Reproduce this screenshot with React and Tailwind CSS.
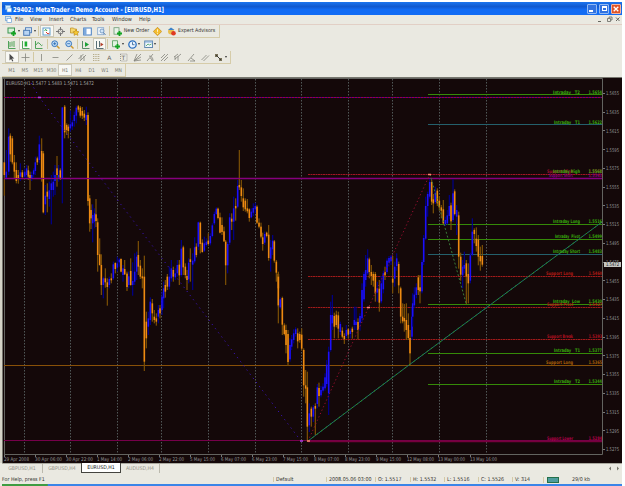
import React from 'react';

const MENU = [
  { label: 'File', w: 'w-[15px]' },
  { label: 'View', w: 'w-[19px]' },
  { label: 'Insert', w: 'w-[21px]' },
  { label: 'Charts', w: 'w-[22px]' },
  { label: 'Tools', w: 'w-[20px]' },
  { label: 'Window', w: 'w-[27px]' },
  { label: 'Help', w: 'w-[15px]' },
];

// Candles: direction, x, high, open/close top, open/close bottom, low.
// Values are thirds of a pixel from the origin of the segment.
const SEGMENTS = [
  {
    x: 0, y: 75,
    rows: `d 13 262 262 300 362|u 19 225 290 308 315|u 26 160 185 290 300|d 31 175 182 238 260|d 37 183 190 262 268|d 43 240 262 290 310|d 49 262 285 318 325
d 55 285 300 312 326|u 61 265 292 305 318|d 67 285 292 306 312|u 74 280 290 305 310|u 80 270 280 300 310|d 85 272 286 305 315|d 90 290 300 312 345|u 95 290 300 310 318
u 101 280 286 298 310|u 106 245 262 288 300|d 112 245 250 262 270|u 118 182 208 255 265|d 125 190 228 308 320|d 130 228 235 412 415|u 136 330 362 388 420
d 142 325 350 365 412|u 148 320 346 372 395|u 154 300 325 345 448|u 160 290 320 345 365|u 165 270 300 318 360|d 171 243 280 300 335|u 176 270 300 308 320
d 181 280 286 308 315|u 187 97 97 312 385|d 194 90 95 172 190|d 200 145 150 165 180|d 205 148 155 168 190|u 211 107 148 160 170|u 217 135 142 154 165
u 223 110 120 138 155|u 229 92 98 122 145|d 235 90 94 104 112|d 241 93 98 122 128|d 247 96 108 122 132|d 253 105 116 128 138|u 259 95 120 135 150
d 264 112 120 378 392|d 269 360 370 445 470|d 273 388 405 430 462|u 278 388 420 445 502|u 284 400 415 440 460|d 288 372 418 438 456|d 293 430 442 540 590
d 299 490 538 570 572|d 304 538 570 630 660|u 310 605 610 630 670|d 316 580 610 622 638|d 322 610 622 636 692|u 328 605 612 630 640|d 334 595 610 616 625
u 340 560 568 610 615|d 346 562 564 582 595|u 352 545 565 578 590|u 358 550 554 562 575|d 363 550 552 590 592|u 369 570 580 600 620|d 374 555 582 598 600
d 381 590 596 636 648|u 386 590 604 630 640|d 392 550 588 630 632|u 398 562 618 630 662|u 404 535 590 620 630|u 410 530 545 590 615|d 415 498 540 575 600
d 421 555 572 605 612|d 427 580 604 610 640|d 433 542 605 860 888|d 439 710 740 790 820|u 445 710 730 755 780|u 451 667 680 735 750|d 457 672 685 715 740
d 463 705 725 735 745|d 469 715 730 740 752|u 475 690 705 725 745|d 480 690 700 715 730|u 486 650 665 705 720|u 491 620 640 670 700|d 496 615 630 650 668`,
  },
  {
    x: 150, y: 130,
    rows: `d 52 432 440 470 480|u 58 410 440 470 478|u 64 390 415 445 455|d 70 410 420 440 455|u 76 415 430 442 450|u 82 390 405 430 440|d 88 390 404 436 465
u 94 330 356 435 440|d 100 347 352 412 435|d 106 400 410 435 445|d 111 420 438 450 480|u 116 385 398 448 460|d 121 355 388 396 455|u 128 370 392 404 480
u 134 322 352 394 400|d 139 340 350 375 382|u 145 275 277 350 360|d 151 275 278 342 370|d 157 328 338 366 368|u 163 320 340 362 366|u 169 325 335 345 350
d 175 310 332 342 346|u 181 310 318 340 346|u 187 280 286 318 322|u 193 245 252 280 285|u 199 232 236 252 255|d 204 233 236 264 268|d 210 248 262 308 310
d 216 262 285 306 315|d 222 290 304 334 336|d 227 330 335 406 465|u 233 335 342 406 430|u 239 250 262 338 345|d 245 250 266 275 300|u 251 200 235 275 330
d 257 205 228 235 272|u 263 150 168 230 235|d 268 60 165 172 180|d 274 150 172 198 215|d 280 175 205 232 243|d 286 205 212 238 245|d 292 207 235 244 250
d 298 235 238 264 275|u 304 235 245 262 265|u 310 220 234 248 258|u 316 218 228 238 250|d 321 226 230 278 282|d 327 265 278 290 295|d 333 278 290 320 325
d 338 308 322 342 362|u 344 305 312 338 345|d 350 305 308 318 322|d 356 285 314 384 392|u 362 330 352 386 425|u 368 315 332 358 375|d 373 330 334 392 398
d 379 390 395 428 455|d 385 428 432 475 530`,
  },
  {
    x: 230, y: 270,
    rows: `d 145 5 20 106 160|u 151 82 88 112 116|d 157 80 84 164 195|d 163 160 166 192 196|d 168 164 180 225 250|d 174 180 192 276 288|u 180 205 225 268 275
u 185 195 208 230 240|u 191 178 190 210 220|u 197 172 178 192 200|d 203 175 190 214 235|d 209 185 192 210 218|d 215 175 194 236 242|d 221 235 240 346 380
d 227 300 346 356 400|d 232 305 352 470 515|u 238 400 430 466 486|d 244 410 416 440 470|u 250 405 412 440 456|d 256 400 408 416 495|u 262 342 352 402 415
d 267 338 354 378 410|u 273 348 360 376 382|u 279 340 350 362 368|u 285 310 322 355 362|u 290 270 284 342 350|u 296 230 245 370 435|u 302 95 135 240 245
u 307 75 135 160 180|d 313 128 138 170 205|d 319 122 134 165 172|d 325 125 136 176 205|u 331 155 162 186 195|d 337 172 182 200 205|d 343 190 198 208 222
u 349 165 180 198 205|d 355 175 178 194 205|u 361 175 182 192 205|d 367 170 176 186 206|u 373 110 150 165 180|u 378 110 155 165 180|d 384 145 156 180 208
u 390 130 138 158 182|u 396 40 60 145 155|u 402 5 12 88 95`,
  },
  {
    x: 300, y: 150,
    rows: `u 197 315 360 390 410|u 203 298 325 370 375|d 208 323 328 366 385|d 214 345 366 378 405|d 220 365 372 392 410|d 226 366 372 430 455|u 232 395 415 428 455
d 238 390 416 458 485|u 244 378 400 454 460|u 250 362 370 418 430|d 255 350 366 376 390|u 261 325 332 366 372|u 267 318 324 338 350|u 273 315 320 334 345
d 278 318 386 398 430|u 284 335 350 386 410|u 290 310 325 348 362|d 296 335 342 406 430|d 302 410 415 500 520|d 308 460 500 514 520|d 313 462 504 514 545
d 319 460 510 540 570|d 325 490 525 564 570|d 330 540 564 610 645|u 336 470 500 560 570|u 338 430 460 500 530|u 343 412 434 466 475|u 349 400 412 435 445
d 355 375 382 420 435|d 360 375 412 424 460|u 366 330 336 424 430|u 371 255 264 336 345|u 377 140 168 266 270|u 383 125 132 168 200|u 389 85 96 140 146
d 395 90 96 155 165|d 400 132 148 160 190|u 406 110 128 156 162|d 412 115 122 160 168|d 418 138 152 172 182|d 424 165 172 182 205|d 430 150 178 220 224
u 436 200 210 222 228|u 442 180 196 220 224|u 448 135 168 198 208|d 453 158 166 214 240|u 459 88 130 210 216|d 464 118 124 192 196|u 470 165 180 200 255
d 476 185 196 320 356`,
  },
  {
    x: 410, y: 150,
    rows: `d 152 308 320 374 392|u 158 330 350 376 415|u 163 305 345 356 370|d 169 330 340 380 462|d 175 340 372 400 460|u 181 308 316 392 400|u 187 205 245 314 318
d 193 235 240 252 280|d 199 232 266 288 305|d 205 255 268 320 346|d 211 290 318 334 362|d 217 285 318 344 350`,
  },
];

const DAY_LINES = [24, 70, 117, 161, 208, 255, 301, 348, 392, 439, 486];

const TIMES = [
  [4, '29 Apr 2008'], [35, '30 Apr 06:00'], [66, '30 Apr 22:00'], [97, '1 May 14:00'],
  [128, '2 May 06:00'], [159, '2 May 22:00'], [190, '5 May 15:00'], [221, '6 May 07:00'],
  [252, '6 May 23:00'], [283, '7 May 15:00'], [314, '8 May 07:00'], [345, '8 May 23:00'],
  [376, '9 May 15:00'], [407, '12 May 08:00'], [438, '13 May 00:00'], [470, '13 May 16:00'],
];

// label, price, line y, x where the name starts, color
const LEVELS = [
  ['Support High', '1.5568', 174, 547, '#a01030'],
  ['Support Short', '1.5563', 178, 549, '#86007c'],
  ['Support Long', '1.5460', 276, 546, '#b01a14'],
  ['Support Pivot', '1.5427', 307, 547, '#b01a14'],
  ['Support Break', '1.5393', 339, 547, '#b01020'],
  ['Support Long', '1.5365', 365, 546, '#a86008'],
  ['Support Lower', '1.5284', 441, 547, '#b00048'],
  ['Intraday   T2', '1.5654', 95, 553, '#38a80c'],
  ['Intraday   T1', '1.5622', 125, 554, '#38a80c'],
  ['Intraday High', '1.5568', 174, 553, '#38a80c'],
  ['Intraday Long', '1.5516', 224, 553, '#38a80c'],
  ['Intraday  Pivot', '1.5499', 239, 555, '#38a80c'],
  ['Intraday Short', '1.5483', 254, 553, '#38a80c'],
  ['Intraday  Low', '1.5430', 304, 553, '#38a80c'],
  ['Intraday   T1', '1.5377', 353, 554, '#38a80c'],
  ['Intraday   T2', '1.5344', 384, 554, '#38a80c'],
];

function Candle({ row }) {
  const [dir, ...n] = row.trim().split(' ');
  const [x, high, top, bottom, low] = n.map(Number);
  const up = dir === 'u';
  return (
    <g>
      <rect x={x - 1.8} y={high} width="3.6" height={low - high} fill={up ? '#00008a' : '#7c5006'} />
      <rect x={x - 2.3} y={top} width="4.7" height={bottom - top} fill={up ? '#1c10fa' : '#ee8a12'} />
    </g>
  );
}

function HLine({ y, x = 4, color, dash, w = 1 }) {
  return <line x1={x} x2="602" y1={y + 0.5} y2={y + 0.5} stroke={color} strokeWidth={w} strokeDasharray={dash} />;
}

function Chart() {
  const prices = Array.from({ length: 20 }, (_, i) => (1.5655 - i * 0.002).toFixed(4));
  return (
    <svg width="622" height="386" viewBox="0 77 622 386" className="block shrink-0">
      <rect x="0" y="77" width="622" height="386" fill="#d6d4c8" />
      <rect x="2" y="77" width="620" height="386" fill="#77776f" />
      <rect x="3" y="78" width="619" height="385" fill="#140809" />
      <path d="M4.5 79V454.500M3 78.500H602.500V454.500H4" stroke="#63635f" fill="none" />

      {DAY_LINES.map((x) => (
        <line key={x} x1={x + 0.5} x2={x + 0.5} y1="79" y2="454" stroke="#515858" strokeDasharray="1.500 1.500" />
      ))}

      {/* Levels */}
      <HLine y={94} x={428} color="#358a08" />
      <HLine y={97} color="#3a0090" />
      <HLine y={97} color="#98004c" dash="2 1" />
      <HLine y={124} x={428} color="#24606c" />
      <HLine y={174} x={308} color="#a01424" dash="2 0.500" />
      <HLine y={178} color="#86007e" w={1.5} />
      <HLine y={224} x={428} color="#358a08" />
      <HLine y={239} x={428} color="#358a08" />
      <HLine y={254} x={428} color="#24606c" />
      <HLine y={276} x={308} color="#a01a1a" dash="2 0.500" />
      <HLine y={304} x={428} color="#358a08" />
      <HLine y={307} x={308} color="#a01a1a" dash="2 0.500" />
      <HLine y={339} x={308} color="#a01a1a" dash="2 0.500" />
      <HLine y={353} x={428} color="#358a08" />
      <HLine y={365} color="#885008" />
      <HLine y={384} x={428} color="#358a08" />
      <HLine y={440} color="#76004a" />
      <HLine y={441} x={308} color="#76003c" w={1.4} />

      {/* Candles */}
      {SEGMENTS.map((s, i) => (
        <g key={i} transform={`translate(${s.x} ${s.y}) scale(0.33333)`}>
          {s.rows.split(/[|\n]/).map((row, j) => (
            <Candle key={j} row={row} />
          ))}
        </g>
      ))}
      <HLine y={178} color="#86007e" w={1.2} />

      {/* Trend lines */}
      <path d="M31 83L39.500 97.500L301 441" stroke="#3a12b8" strokeDasharray="1.200 4" fill="none" />
      <path d="M308 441L368.500 307.500L430 174" stroke="#9c0e30" strokeDasharray="1.200 2.500" fill="none" />
      <path d="M430 174L466 303" stroke="#3a7c38" strokeDasharray="2 2" fill="none" />
      <path d="M308 441L409 365L602 222" stroke="#1c7468" fill="none" />
      <path d="M308 441L409 365L602 222" stroke="#309414" strokeDasharray="1.500 4" fill="none" />
      <path d="M38 97.500h3M300 441h3" stroke="#b040e0" strokeWidth="1.600" />
      <path d="M307 441h3M367 307.500h3M428 174.500h3" stroke="#ff8070" strokeWidth="1.600" />

      {/* Texts */}
      <g fontFamily="'DejaVu Sans Condensed', 'DejaVu Sans', sans-serif" fontSize="5">
        <text x="6" y="84.500" fill="#a2a5a2" textLength="88" lengthAdjust="spacingAndGlyphs">EURUSD,H1  1.5477 1.5483 1.5471 1.5472</text>
        {LEVELS.map(([label, price, y, x, color], i) => (
          <g key={i} fill={color} fontSize="4.800" fontWeight="bold">
            <text x={x} y={y - 1} textLength={label.startsWith('I') ? 580 - x : 573 - x} lengthAdjust="spacingAndGlyphs" xmlSpace="preserve">{label}</text>
            <text x="588.500" y={y - 1} textLength="13.500" lengthAdjust="spacingAndGlyphs">{price}</text>
          </g>
        ))}
        {prices.map((p, i) => (
          <g key={p}>
            <path d={`M603 ${Math.round(93 + i * 18.74) + 0.5}h2`} stroke="#777" />
            <text x="606" y={95.300 + i * 18.74} fill="#969999" textLength="13" lengthAdjust="spacingAndGlyphs">{p}</text>
          </g>
        ))}
        <rect x="604" y="262" width="17" height="5" fill="#c6c6c2" />
        <text x="606" y="266.400" fill="#222" textLength="13" lengthAdjust="spacingAndGlyphs">1.5472</text>
        {TIMES.map(([x, t]) => (
          <g key={x}>
            <path d={`M${x + 0.5} 455v2`} stroke="#777" />
            <text x={x} y="461" fill="#969999" textLength={t.length < 12 ? 25 : 27} lengthAdjust="spacingAndGlyphs">{t}</text>
          </g>
        ))}
      </g>
    </svg>
  );
}

const plus = <path d="M6.500 4v5M4 6.500h5" stroke="#12a322" strokeWidth="1.800" />;
const gray = { stroke: '#85857d', fill: 'none', strokeWidth: 0.8 };

const ICONS = {
  newChart: <><rect x="1" y="1" width="6.500" height="5" fill="#d6f1d8" stroke="#3b9651" />{plus}</>,
  profiles: <><rect x="2.500" y="0.700" width="6" height="5" fill="#ddeaf8" stroke="#5a86bd" /><rect x="0.700" y="3.300" width="6" height="5" fill="#b9d5f3" stroke="#4c7bb5" /></>,
  market: <><rect x="1" y="1" width="7" height="7" fill="#fff" stroke="#5e9dcc" /><path d="M2.500 3.500l1.500-1 1 1.500" stroke="#22a040" fill="none" /><path d="M4 5l2 2 1.500-1" stroke="#e03828" fill="none" /></>,
  target: <><circle cx="4.500" cy="4.500" r="2.500" fill="none" stroke="#777" /><path d="M4.500 0v3.500M4.500 5.500V9M0 4.500h3.500M5.500 4.500H9" stroke="#777" /></>,
  folder: <><path d="M0.500 1h3l1 1h2v4h-6z" fill="#f5d66c" stroke="#bc8c20" strokeWidth="0.700" /><path d="M6 2.500l1 2 2 .3-1.500 1.400.4 2.200L6 7.300 4 8.400l.4-2.200L3 4.800l2-.3z" fill="#f6c832" stroke="#b88710" strokeWidth="0.600" /></>,
  terminal: <><rect x="0.700" y="1" width="7.600" height="7" fill="#fff" stroke="#477fc3" /><rect x="1" y="1" width="2.500" height="7" fill="#7da9dd" /></>,
  tester: <><rect x="0.700" y="0.700" width="6" height="7" fill="#eff5fb" stroke="#83a5cb" strokeWidth="0.800" /><circle cx="5" cy="4" r="2" fill="#d0e4f7" stroke="#5c85b5" strokeWidth="0.700" /><path d="M6.500 5.500l2 2.500" stroke="#5c85b5" /></>,
  order: <><rect x="1" y="0.700" width="5" height="6.500" fill="#e8f2e8" stroke="#6c9c74" strokeWidth="0.800" />{plus}</>,
  diamond: <><path d="M4.500 .3L8.700 4.500 4.500 8.700 .3 4.500z" fill="#f4bd2e" stroke="#b97e10" strokeWidth="0.600" /><path d="M4.500 2.300v2.500M4.500 5.800v1" stroke="#fff3ce" /></>,
  expert: <><circle cx="4" cy="4.500" r="3" fill="#e8bf50" /><path d="M1 3l3-2.500L7.500 3z" fill="#3c82cc" /><circle cx="6.500" cy="6.300" r="2.300" fill="#df3a22" /></>,
  bars: <path d="M1.500 1v7.500h7M3 2v5M5 1.500v5M7 1v6" stroke="#3e9a4b" fill="none" strokeWidth="0.900" />,
  candles: <><path d="M1.500 1v7.500h7" stroke="#3e9a4b" fill="none" strokeWidth="0.900" /><rect x="3.600" y="1.500" width="2.600" height="5" fill="#1cae32" /></>,
  line: <path d="M1.500 1v7.500h7M2 5q2-4 4-1t2.500 1" stroke="#3e9a4b" fill="none" strokeWidth="0.900" />,
  zoomIn: <><circle cx="3.700" cy="3.700" r="2.900" fill="#c3def8" stroke="#3776bd" /><path d="M2.200 3.700h3M3.700 2.200v3" stroke="#2563a9" strokeWidth="0.800" /><path d="M6 6l2.500 2.500" stroke="#cf982a" strokeWidth="1.400" /></>,
  zoomOut: <><circle cx="3.700" cy="3.700" r="2.900" fill="#c3def8" stroke="#3776bd" /><path d="M2.200 3.700h3" stroke="#2563a9" strokeWidth="0.800" /><path d="M6 6l2.500 2.500" stroke="#cf982a" strokeWidth="1.400" /></>,
  scroll: <><path d="M1.500 1v7.500h7" stroke="#4a8258" fill="none" strokeWidth="0.900" /><path d="M4 2l4 2.500L4 7z" fill="#1ca036" /></>,
  shift: <><path d="M1.500 1v7.500h7M4.500 1v6" stroke="#455f68" fill="none" strokeWidth="0.900" /><path d="M5.500 2.500l3 2-3 2z" fill="#b0402c" /></>,
  indicators: <><path d="M1.500 .7h5v6h-5z" fill="#e1f3e0" stroke="#4e9d58" strokeWidth="0.800" />{plus}</>,
  clock: <><circle cx="4.500" cy="4.500" r="3.700" fill="#e8f3ff" stroke="#2b6fc0" strokeWidth="1.300" /><path d="M4.500 2.200v2.500h2" stroke="#26598f" fill="none" strokeWidth="0.800" /></>,
  template: <><rect x="0.700" y="1" width="7.800" height="6.500" fill="#eef5fb" stroke="#6189b0" /><path d="M1 2h7.500" stroke="#7ca7d8" /><path d="M2 6l2-2 1.500 1L7.500 4" stroke="#43a05c" fill="none" strokeWidth="0.800" /></>,
  cursor: <path d="M2.500 .7v6.800l1.600-1.600L5.300 8.500l1-.5-1.200-2.400H7.300z" fill="#4a4a4a" />,
  cross: <path d="M4.500 0.500v8M0.500 4.500h8" {...gray} />,
  vline: <path d="M4.500 1v7" {...gray} />,
  hline: <path d="M1.500 4.500h6" {...gray} />,
  trend: <path d="M1.500 7.500l6-6" {...gray} />,
  channel: <path d="M0.500 6l5-5M2 8l6-6M3 2v5M6 3v5" {...gray} />,
  fib: <path d="M1 1.500h7M1 3.500h7M1 5.500h7M1 7.500h7" {...gray} stroke="#a79b72" strokeDasharray="1 0.700" />,
  letterA: <text x="2.300" y="6.800" fontSize="6" fill="#66665f" fontFamily="DejaVu Sans">A</text>,
  letterT: <><rect x="1.500" y="1" width="6.500" height="7" {...gray} strokeDasharray="1 1" /><text x="2.500" y="6.800" fontSize="6" fill="#66665f" fontFamily="DejaVu Sans">T</text></>,
  fan: <path d="M1 8L8 1M1 8l7-4M1 8l7-1M1 8L4 1" {...gray} />,
  arcs: <path d="M1 8l6-7M3 3q4 0 4 5M4 5q2 0 2 3" {...gray} />,
  gann: <path d="M1 5l4-4M1 8l7-7M4 8l4-4" {...gray} />,
  fork: <path d="M1 4l4-3M2 6l6-5M5 3v5M2 3v4" {...gray} />,
  angle: <path d="M1 8l6-7M4 5l4 3H3" {...gray} />,
  lines: <path d="M0.500 7l5-5M2.500 8l5.500-5.500" {...gray} />,
  arrows: <><path d="M1 1h3v3H1zM5 5h3v3H5z" fill="#777058" /><path d="M2 2l5 5" stroke="#3c3c34" /></>,
};

function Tool({ icon, pressed, arrow, sep }) {
  return (
    <div className="flex h-[13px] shrink-0 items-center">
      {sep && <div className="mx-px h-[10px] w-px bg-[#d3c9a2]" />}
      <div className={`flex h-[12px] w-[13.6px] items-center justify-center ${pressed ? 'bg-[#f8f8f4] outline -outline-offset-1 outline-[#cbc8ba]' : ''}`}>
        <svg width="9" height="9" viewBox="0 0 9 9">{ICONS[icon]}</svg>
      </div>
      {arrow && <div className="-ml-px mr-[1.5px] border-x-[1.5px] border-t-2 border-x-transparent border-t-[#333]" />}
    </div>
  );
}

function Toolbar({ width, children }) {
  return (
    <div className={`flex h-[13px] ${width} shrink-0 items-center border-b border-r border-[#d6cca9] pl-[3px]`}>
      {children}
    </div>
  );
}

export default function App() {
  return (
    <div className="h-[486px] w-[625px] overflow-hidden bg-white pt-[2px] font-['DejaVu_Sans_Condensed','DejaVu_Sans',sans-serif] text-[5.5px] leading-none text-[#33332f]">
      <div className="flex h-[484px] w-[622px] flex-col bg-[#eae9e1] whitespace-nowrap">
        {/* Title bar */}
        <div className="ml-[2px] flex h-[13px] shrink-0 items-center bg-linear-to-b from-[#1c75ef] via-[#1059d0] via-35% to-[#126cf4] to-60% pl-[3px] pr-px">
          <svg width="7" height="8" viewBox="0 0 7 8">
            <rect x="0.500" y="0.500" width="5" height="4" fill="#d5ecff" stroke="#78b6e7" strokeWidth="0.600" />
            <rect x="2" y="3" width="4.500" height="4" fill="#fff" stroke="#69a9de" strokeWidth="0.600" />
          </svg>
          <svg width="170" height="12" className="ml-[1px]">
            <text x="0" y="8.700" fill="#fff" fontSize="6.800" fontWeight="bold" textLength="151" lengthAdjust="spacingAndGlyphs">29402: MetaTrader - Demo Account - [EURUSD,H1]</text>
          </svg>
          <div className="ml-auto flex gap-[2px]">
            <div className="flex h-[10px] w-[10px] items-end rounded-[1px] border border-[#91baf4] bg-[#3273e0] p-[1px]"><div className="h-[1.5px] w-[4px] bg-white" /></div>
            <div className="flex h-[10px] w-[10px] items-center justify-center rounded-[1px] border border-[#91baf4] bg-[#3273e0]"><div className="h-[5px] w-[5px] border border-t-2 border-white" /></div>
            <div className="flex h-[10px] w-[10px] items-center justify-center rounded-[1px] border border-[#f2b5a0] bg-[#df5427]">
              <svg width="6" height="6"><path d="M.7.7l4.600 4.600M5.300.7L.7 5.300" stroke="#fff" strokeWidth="1.300" /></svg>
            </div>
          </div>
        </div>

        {/* Menu */}
        <div className="ml-[2px] flex h-[10px] shrink-0 items-center border-b border-[#e2cfc5] pl-[3px] text-[5.6px]">
          <svg width="7" height="7" className="mr-[3px]">
            <rect x="0.500" y="0.500" width="5" height="4" fill="#d9e9fa" stroke="#6c9fd4" strokeWidth="0.700" />
            <rect x="2" y="2.500" width="4.500" height="4" fill="#fff" stroke="#6c9fd4" strokeWidth="0.700" />
          </svg>
          {MENU.map((m) => (
            <div key={m.label} className={m.w}>{m.label}</div>
          ))}
          <svg width="24" height="7" className="ml-auto mr-[1px]" fill="none" stroke="#66665f">
            <path d="M1 5.500h3" />
            <path d="M10.500 2.500h3v3h-3zM12 2V1h3v3h-1" strokeWidth="0.800" />
            <path d="M19 1.500l3.500 3.500M22.500 1.500L19 5" />
          </svg>
        </div>

        {/* Toolbars */}
        <div className="ml-[2px] flex h-[52px] shrink-0 flex-col">
          <Toolbar width="w-[218px]">
            <Tool icon="newChart" arrow />
            <Tool icon="profiles" arrow />
            <Tool icon="market" pressed sep />
            <Tool icon="target" />
            <Tool icon="folder" />
            <Tool icon="terminal" />
            <Tool icon="tester" />
            <Tool icon="order" sep />
            <div className="-ml-px w-[27px] text-[5.3px]">New Order</div>
            <Tool icon="diamond" />
            <Tool icon="expert" />
            <div className="text-[5.3px]">Expert Advisors</div>
          </Toolbar>
          <Toolbar width="w-[158px]">
            <Tool icon="bars" />
            <Tool icon="candles" pressed />
            <Tool icon="line" />
            <Tool icon="zoomIn" sep />
            <Tool icon="zoomOut" />
            <Tool icon="scroll" sep />
            <Tool icon="shift" pressed />
            <Tool icon="indicators" sep arrow />
            <Tool icon="clock" arrow />
            <Tool icon="template" arrow />
          </Toolbar>
          <Toolbar width="w-[229px]">
            <Tool icon="cursor" pressed />
            <Tool icon="cross" />
            <Tool icon="vline" sep />
            <Tool icon="hline" />
            <Tool icon="trend" />
            <Tool icon="channel" />
            <Tool icon="fib" />
            <Tool icon="letterA" />
            <Tool icon="letterT" />
            <Tool icon="fan" />
            <Tool icon="arcs" />
            <Tool icon="gann" />
            <Tool icon="fork" />
            <Tool icon="angle" />
            <Tool icon="lines" />
            <Tool icon="arrows" arrow />
          </Toolbar>
          <Toolbar width="w-[124px]">
            {['M1', 'M5', 'M15', 'M30', 'H1', 'H4', 'D1', 'W1', 'MN'].map((p) => (
              <div key={p} className={`flex h-[12px] w-[13.6px] items-center justify-center text-[5px] text-[#77776e] ${p === 'H1' ? 'border border-[#cbc8ba] bg-[#f8f8f4]' : ''}`}>{p}</div>
            ))}
          </Toolbar>
        </div>

        <Chart />

        {/* Chart tabs */}
        <div className="ml-[2px] flex h-[12px] shrink-0 items-start border-t border-[#aaa99f] text-[5.2px] text-[#99978b]">
          <div className="flex h-[9px] w-[41px] items-center justify-center border-r border-[#bbb9ad]">GBPUSD,H1</div>
          <div className="flex h-[9px] w-[38px] items-center justify-center">GBPUSD,H4</div>
          <div className="-mt-px flex h-[10px] w-[40px] items-center justify-center border border-t-0 border-[#44443f] bg-white text-[#222]">EURUSD,H1</div>
          <div className="flex h-[9px] w-[39px] items-center justify-center border-r border-[#bbb9ad]">AUDUSD,H4</div>
          <svg width="14" height="9" className="ml-auto mr-[1px]" fill="#77766b"><path d="M4 2.500v4L2 4.500zM10 2.500v4l2-2z" /></svg>
        </div>

        {/* Status bar */}
        <div className="ml-[2px] flex h-[9px] shrink-0 items-center text-[5.3px]">
          <div className="w-[271px]">For Help, press F1</div>
          <div className="w-[53px] border-l border-[#d4caa6] pl-[2px]">Default</div>
          <div className="w-[49px] border-l border-[#d4caa6] pl-[2px]">2008.05.06 03:00</div>
          <div className="w-[35px] border-l border-[#d4caa6] pl-[2px]">O: 1.5517</div>
          <div className="w-[34px] border-l border-[#d4caa6] pl-[2px]">H: 1.5532</div>
          <div className="w-[34px] border-l border-[#d4caa6] pl-[2px]">L: 1.5516</div>
          <div className="w-[34px] border-l border-[#d4caa6] pl-[2px]">C: 1.5526</div>
          <div className="w-[31px] border-l border-[#d4caa6] pl-[2px]">V: 314</div>
          <div className="w-[29px] border-l border-[#d4caa6] pl-[3px]">
            <svg width="12" height="6"><rect width="12" height="6" fill="#23704a" /><path d="M2 1v4M4 1v4M6 1v4M8 1v4M10 1v4" stroke="#7bc8ef" /></svg>
          </div>
          <div>29/0 kb</div>
        </div>

        {/* Taskbar edge */}
        <div className="ml-[2px] flex h-[2px] shrink-0 bg-[#3a85e8]">
          <div className="w-[46px] rounded-r-[2px] bg-[#3f9c42]" />
        </div>
      </div>
    </div>
  );
}
